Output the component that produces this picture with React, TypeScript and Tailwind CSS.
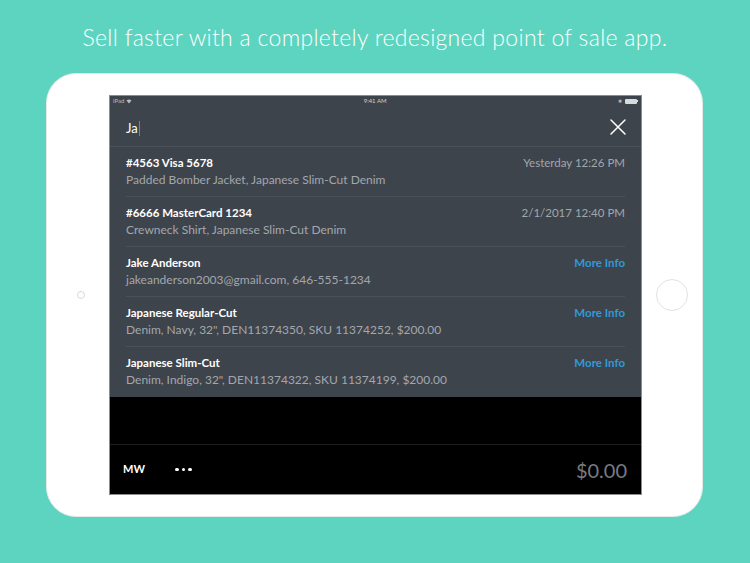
import React from "react";

const rows = [
  { title: "#4563 Visa 5678", sub: "Padded Bomber Jacket, Japanese Slim-Cut Denim", right: "Yesterday 12:26 PM", link: false },
  { title: "#6666 MasterCard 1234", sub: "Crewneck Shirt, Japanese Slim-Cut Denim", right: "2/1/2017 12:40 PM", link: false },
  { title: "Jake Anderson", sub: "jakeanderson2003@gmail.com, 646-555-1234", right: "More Info", link: true },
  { title: "Japanese Regular-Cut", sub: "Denim, Navy, 32\", DEN11374350, SKU 11374252, $200.00", right: "More Info", link: true },
  { title: "Japanese Slim-Cut", sub: "Denim, Indigo, 32\", DEN11374322, SKU 11374199, $200.00", right: "More Info", link: true },
];

export default function App() {
  return (
    <div className="w-[750px] h-[563px] bg-[#5dd4bf] flex flex-col overflow-hidden" style={{ fontFamily: "Lato, 'Open Sans', 'Liberation Sans', sans-serif" }}>
      <div className="h-[73px] flex items-start justify-center pt-[23px]">
        <h1 className="text-white text-[23px] leading-[28px] font-light tracking-[0.3px]">
          Sell faster with a completely redesigned point of sale app.
        </h1>
      </div>
      <div className="ml-[46px] w-[657px] h-[444px] rounded-[30px] bg-white border border-[#e4e8e7] flex items-center">
        <div className="w-[62px] flex justify-center pl-[6px]">
          <div className="w-[8px] h-[8px] rounded-full border border-[#d8d8d8]" />
        </div>
        <div className="w-[533px] h-[400px] flex flex-col border border-[#8a8d90] bg-[#3e444c]">
          {/* status bar */}
          <div className="h-[10px] flex items-center justify-between px-[3px] text-[6px] leading-[6px] text-[#b8bcc0]">
            <div className="flex items-center gap-[2px]">
              <span>iPad</span>
              <svg width="6" height="5" viewBox="0 0 12 10"><path d="M6 9 L1 3 A8 8 0 0 1 11 3 Z" fill="#b8bcc0" /></svg>
            </div>
            <span className="text-[#d0d3d6]">9:41 AM</span>
            <div className="flex items-center gap-[3px]">
              <span className="text-[5px]">✱</span>
              <div className="flex items-center">
                <div className="w-[12px] h-[5px] bg-[#d8dbde] rounded-[1px]" />
                <div className="w-[1px] h-[2px] bg-[#d8dbde]" />
              </div>
            </div>
          </div>
          {/* search */}
          <div className="h-[41px] flex items-center justify-between pl-[16px] pr-[14px] border-b border-[#4b5159]">
            <div className="flex items-center pt-[4px]">
              <span className="text-white text-[13px] leading-[16px]">Ja</span>
              <span className="w-[1.5px] h-[15px] bg-[#2f96d8] ml-[1px]" />
            </div>
            <svg width="18" height="18" viewBox="0 0 18 18" className="mt-[2px]">
              <path d="M2 2 L16 16 M16 2 L2 16" stroke="#ffffff" strokeWidth="1.5" strokeLinecap="round" />
            </svg>
          </div>
          {/* rows */}
          <div className="flex flex-col">
            {rows.map((r, i) => (
              <div key={i} className="h-[50px] mx-[16px] flex justify-between pt-[7px] border-b border-[#4b5159] last:border-b-0">
                <div className="flex flex-col">
                  <span className="text-white text-[11.5px] leading-[17px] font-bold">{r.title}</span>
                  <span className="text-[#a3a7ac] text-[12px] leading-[17px]">{r.sub}</span>
                </div>
                <span className={r.link ? "text-[#2f9ad9] text-[11.5px] leading-[17px] font-bold" : "text-[#a3a7ac] text-[11.5px] leading-[17px]"}>
                  {r.right}
                </span>
              </div>
            ))}
          </div>
          <div className="flex-1 bg-black border-b border-[#1c1d20]" />
          <div className="h-[49px] bg-black flex items-center pl-[13px] pr-[14px]">
            <span className="text-white text-[11px] font-bold tracking-[0.2px]">MW</span>
            <div className="flex items-center gap-[3px] ml-[30px]">
              <span className="w-[3.5px] h-[3.5px] rounded-full bg-white" />
              <span className="w-[3.5px] h-[3.5px] rounded-full bg-white" />
              <span className="w-[3.5px] h-[3.5px] rounded-full bg-white" />
            </div>
            <span className="ml-auto text-[#777b80] text-[20px]">$0.00</span>
          </div>
        </div>
        <div className="flex-1 flex justify-center">
          <div className="w-[32px] h-[32px] rounded-full border border-[#e2e2e2]" />
        </div>
      </div>
    </div>
  );
}
